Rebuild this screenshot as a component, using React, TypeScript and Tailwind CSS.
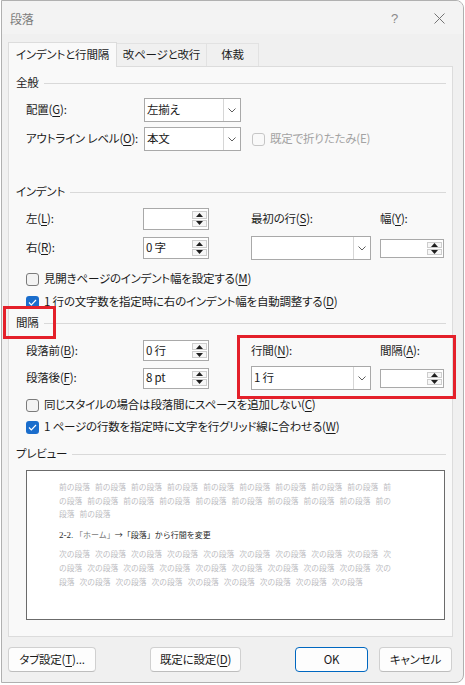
import type { FC, ReactNode } from 'react';

const K: FC<{ children: ReactNode }> = ({ children }) => (
  <u className="decoration-1 underline-offset-[2px]">{children}</u>
);

const Heading: FC<{ label: string; className?: string }> = ({ label, className }) => (
  <div className={`flex h-[16px] shrink-0 items-center pl-[7px] pr-[6px] ${className ?? ''}`}>
    <span className="whitespace-nowrap text-[11.5px] leading-none text-[#1b1b1b]">{label}</span>
    <div className="ml-[5px] h-px flex-1 bg-[#d9d9d9]" />
  </div>
);

const Chevron = () => (
  <svg width="8" height="5" viewBox="0 0 8 5">
    <path d="M0.5 0.5L4 4L7.5 0.5" fill="none" stroke="#5f5f5f" strokeWidth="1" />
  </svg>
);

const Select: FC<{ value?: string; className?: string }> = ({ value = '', className }) => (
  <div className={`flex shrink-0 border border-[#a9a9a9] bg-white ${className ?? ''}`}>
    <span className="flex flex-1 items-center pl-[2px] text-[11.5px] leading-none text-[#1b1b1b]">{value}</span>
    <div className="flex w-[17px] items-center justify-center border-l border-[#d6d6d6] bg-white">
      <Chevron />
    </div>
  </div>
);

const SpinBtn: FC<{ up?: boolean }> = ({ up }) => (
  <div className="flex w-[15px] flex-1 items-center justify-center border border-[#cdcdcd] bg-[#f7f7f7]">
    <svg width="7" height="4" viewBox="0 0 7 4">
      <path d={up ? 'M0 4L3.5 0L7 4Z' : 'M0 0L3.5 4L7 0Z'} fill="#1f1f1f" />
    </svg>
  </div>
);

const Spin: FC<{ value?: string; className?: string }> = ({ value = '', className }) => (
  <div className={`flex shrink-0 border border-[#a9a9a9] bg-white ${className ?? ''}`}>
    <span className="flex flex-1 items-center pl-[2px] text-[11.5px] leading-none text-[#1b1b1b]">{value}</span>
    <div className="flex flex-col gap-px py-[2px] pr-px">
      <SpinBtn up />
      <SpinBtn />
    </div>
  </div>
);

const Box: FC<{ checked?: boolean; disabled?: boolean }> = ({ checked, disabled }) => {
  if (checked) {
    return (
      <span className="flex h-[13px] w-[13px] shrink-0 items-center justify-center rounded-[3px] bg-[#1a6dcc]">
        <svg width="9" height="7" viewBox="0 0 9 7">
          <path d="M1 3.5L3.3 5.8L8 1" fill="none" stroke="white" strokeWidth="1.2" />
        </svg>
      </span>
    );
  }
  return (
    <span
      className={`block h-[13px] w-[13px] shrink-0 rounded-[3px] border ${
        disabled ? 'border-[#c6c6c6] bg-[#f9f9f9]' : 'border-[#7b7b7b] bg-[#f3f3f3]'
      }`}
    />
  );
};

const Check: FC<{ checked?: boolean; className?: string; children: ReactNode }> = ({ checked, className, children }) => (
  <div className={`flex h-[16px] shrink-0 items-center pl-[17px] ${className ?? ''}`}>
    <Box checked={checked} />
    <span className="ml-[5px] whitespace-nowrap text-[11.5px] leading-none text-[#1b1b1b]">{children}</span>
  </div>
);

const Label: FC<{ className?: string; children: ReactNode }> = ({ className, children }) => (
  <span className={`shrink-0 whitespace-nowrap text-[11.5px] leading-none text-[#1b1b1b] ${className ?? ''}`}>
    {children}
  </span>
);

const Button: FC<{ primary?: boolean; className?: string; children: ReactNode }> = ({ primary, className, children }) => (
  <button
    type="button"
    className={`flex h-[25px] items-center justify-center whitespace-nowrap rounded-[4px] border bg-[#fdfdfd] text-[11.5px] leading-none text-[#1b1b1b] ${
      primary ? 'border-[#0067c0]' : 'border-[#d0d0d0] border-b-[#bdbdbd]'
    } ${className ?? ''}`}
  >
    {children}
  </button>
);

const before = Array(20).fill('前の段落').join(' ');
const after = Array(27).fill('次の段落').join(' ');

const Preview = () => (
  <div className="ml-[17px] mt-[8px] h-[150px] w-[419px] shrink-0 border border-[#6b6b6b] bg-white pl-[32px] pt-[9px] tracking-normal [font-feature-settings:normal]">
    <div className="w-[335px]">
      <p className="text-[7.75px] leading-[13.5px] text-[#bdbdc2] [word-spacing:3.3px]">{before}</p>
      <p className="mt-[7px] text-[8px] leading-[14px] text-[#2a2a2a]">
        <span className="font-['Liberation_Serif',serif] text-[9px]">2-2.</span>{' '}
        <span className="text-[#7a7a7a]">「ホーム」</span>→「段落」から行間を変更
      </p>
      <p className="mt-[5px] text-[7.75px] leading-[14px] text-[#bdbdc2] [word-spacing:3.3px]">{after}</p>
    </div>
  </div>
);

export default function App() {
  return (
    <div className="relative h-[685px] w-[465px] bg-white font-['Noto_Sans_CJK_JP',sans-serif] tracking-[-0.2px] [font-feature-settings:'palt']">
      <div className="ml-px flex h-[683px] w-[463px] flex-col overflow-hidden rounded-r-[8px] border border-[#b0b0b0] bg-[#f0f0f0]">
        {/* title bar */}
        <div className="flex h-[33px] shrink-0 items-center bg-[#f3f3f3] pl-[8px] pt-[2px]">
          <span className="text-[12px] leading-none text-[#7c7c7c]">段落</span>
          <span className="ml-auto font-['Liberation_Sans',sans-serif] text-[13px] leading-none text-[#8a8a8a]">?</span>
          <svg className="ml-[36px] mr-[18px]" width="11" height="11" viewBox="0 0 11 11">
            <path d="M0.5 0.5L10.5 10.5M10.5 0.5L0.5 10.5" stroke="#747474" strokeWidth="1" />
          </svg>
        </div>

        {/* tabs */}
        <div className="mt-[8px] flex shrink-0 items-end pl-[6px]">
          <div className="relative z-10 -mb-px flex h-[25px] w-[109px] items-center justify-center border border-b-0 border-[#dcdcdc] bg-[#f9f9f9] text-[11.5px] leading-none text-[#1b1b1b]">
            インデントと行間隔
          </div>
          <div className="flex h-[23px] w-[90px] items-center justify-center border-t border-r border-[#e2e2e2] bg-[#f0f0f0] text-[11.5px] leading-none text-[#1b1b1b]">
            改ページと改行
          </div>
          <div className="flex h-[23px] w-[52px] items-center justify-center border-t border-r border-[#e2e2e2] bg-[#f0f0f0] text-[11.5px] leading-none text-[#1b1b1b]">
            体裁
          </div>
        </div>

        {/* panel */}
        <div className="ml-[6px] flex h-[571px] w-[445px] shrink-0 flex-col border border-[#dcdcdc] bg-[#f9f9f9] pt-[8px]">
          <Heading label="全般" />
          <div className="mt-[7px] flex h-[24px] shrink-0 items-center pl-[17px]">
            <Label className="w-[118px]">
              配置(<K>G</K>):
            </Label>
            <Select value="左揃え" className="h-[24px] w-[97px]" />
          </div>
          <div className="mt-[5px] flex h-[24px] shrink-0 items-center pl-[17px]">
            <Label className="w-[118px]">
              アウトライン レベル(<K>O</K>):
            </Label>
            <Select value="本文" className="h-[24px] w-[97px]" />
            <span className="ml-[11px] flex">
              <Box disabled />
            </span>
            <Label className="ml-[5px] text-[#a3a3a3]">既定で折りたたみ(E)</Label>
          </div>

          <Heading label="インデント" className="mt-[33px]" />
          <div className="mt-[8px] flex h-[22px] shrink-0 items-center pl-[17px]">
            <Label className="w-[117px]">
              左(<K>L</K>):
            </Label>
            <Spin className="h-[22px] w-[66px]" />
            <Label className="ml-[42px] w-[129px]">
              最初の行(<K>S</K>):
            </Label>
            <Label>
              幅(<K>Y</K>):
            </Label>
          </div>
          <div className="mt-[6px] flex h-[24px] shrink-0 items-center pl-[17px]">
            <Label className="w-[117px]">
              右(<K>R</K>):
            </Label>
            <Spin value="0 字" className="h-[22px] w-[66px]" />
            <Select className="ml-[42px] h-[24px] w-[120px]" />
            <Spin className="ml-[9px] h-[19px] w-[64px]" />
          </div>
          <Check className="mt-[11px]">
            見開きページのインデント幅を設定する(<K>M</K>)
          </Check>
          <Check checked className="mt-[7px]">
            1 行の文字数を指定時に右のインデント幅を自動調整する(<K>D</K>)
          </Check>

          <Heading label="間隔" className="mt-[5px]" />
          <div className="mt-[9px] flex h-[21px] shrink-0 items-center pl-[17px]">
            <Label className="w-[117px]">
              段落前(<K>B</K>):
            </Label>
            <Spin value="0 行" className="h-[21px] w-[66px]" />
            <Label className="ml-[42px] w-[129px]">
              行間(<K>N</K>):
            </Label>
            <Label>
              間隔(<K>A</K>):
            </Label>
          </div>
          <div className="mt-[5px] flex h-[24px] shrink-0 items-center pl-[17px]">
            <Label className="w-[117px]">
              段落後(<K>F</K>):
            </Label>
            <Spin value="8 pt" className="h-[21px] w-[66px]" />
            <Select value="1 行" className="ml-[42px] h-[24px] w-[120px]" />
            <Spin className="ml-[9px] h-[19px] w-[64px]" />
          </div>
          <Check className="mt-[7px]">
            同じスタイルの場合は段落間にスペースを追加しない(<K>C</K>)
          </Check>
          <Check checked className="mt-[6px]">
            1 ページの行数を指定時に文字を行グリッド線に合わせる(<K>W</K>)
          </Check>

          <Heading label="プレビュー" className="mt-[11px]" />
          <Preview />
        </div>

        {/* footer */}
        <div className="mt-[10px] flex shrink-0">
          <Button className="ml-[6px] w-[88px]">
            タブ設定(<K>T</K>)...
          </Button>
          <Button className="ml-[54px] w-[91px]">
            既定に設定(<K>D</K>)
          </Button>
          <Button primary className="ml-[54px] w-[73px]">
            OK
          </Button>
          <Button className="ml-[11px] w-[73px]">キャンセル</Button>
        </div>
      </div>

      {/* red annotation boxes */}
      <div className="pointer-events-none absolute left-[3px] top-[306px] h-[33px] w-[53px] border-[3px] border-[#e4202a]" />
      <div className="pointer-events-none absolute left-[237px] top-[335px] h-[64px] w-[219px] border-[3px] border-[#e4202a]" />
    </div>
  );
}
